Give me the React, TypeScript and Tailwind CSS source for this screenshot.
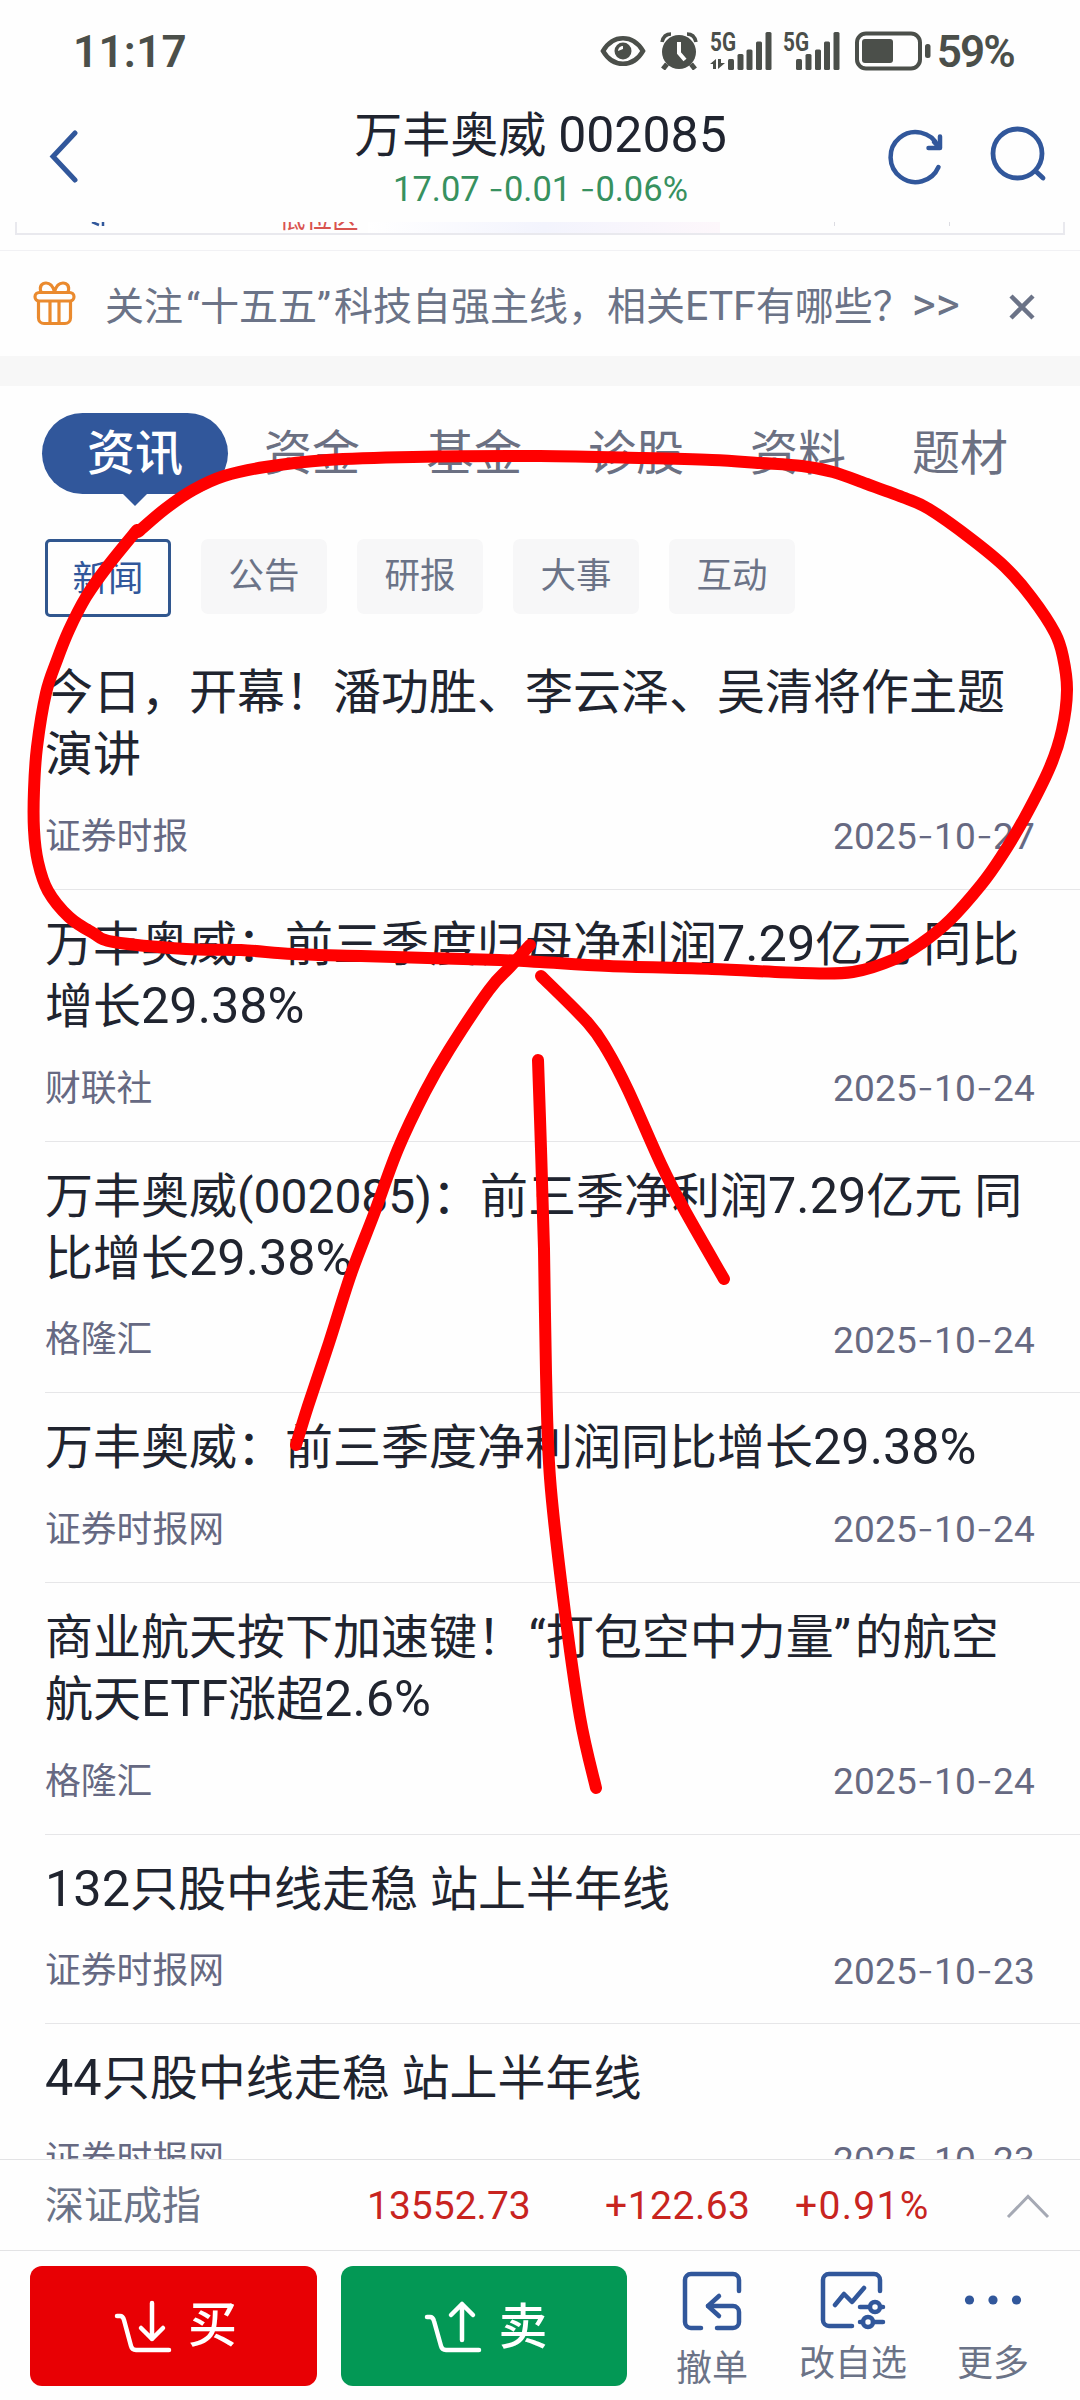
type Point = [number, number];

const TABS = ["资讯", "资金", "基金", "诊股", "资料", "题材"];

const CHIPS = ["新闻", "公告", "研报", "大事", "互动"];

const NEWS = [
  { lines: ["今日，开幕！潘功胜、李云泽、吴清将作主题", "演讲"], source: "证券时报", date: "2025-10-27" },
  { lines: ["万丰奥威：前三季度归母净利润7.29亿元 同比", "增长29.38%"], source: "财联社", date: "2025-10-24" },
  { lines: ["万丰奥威(002085)：前三季净利润7.29亿元 同", "比增长29.38%"], source: "格隆汇", date: "2025-10-24" },
  { lines: ["万丰奥威：前三季度净利润同比增长29.38%"], source: "证券时报网", date: "2025-10-24" },
  { lines: ["商业航天按下加速键！“打包空中力量”的航空", "航天ETF涨超2.6%"], source: "格隆汇", date: "2025-10-24" },
  { lines: ["132只股中线走稳 站上半年线"], source: "证券时报网", date: "2025-10-23" },
  { lines: ["44只股中线走稳 站上半年线"], source: "证券时报网", date: "2025-10-23" },
];

/* Hand-drawn marker strokes */
const LOOP: Point[] = [
  [138, 532], [165, 509], [193, 490], [224, 476], [265, 467], [327, 460], [413, 457], [540, 456],
  [643, 458], [712, 460], [760, 463], [802, 466], [833, 472], [867, 484], [905, 498], [929, 509],
  [970, 538], [1005, 567], [1032, 598], [1055, 633], [1063, 657], [1067, 690], [1062, 730],
  [1050, 767], [1025, 817], [1001, 857], [981, 885], [950, 920], [922, 943], [895, 959], [853, 972],
  [802, 973], [712, 969], [609, 966], [540, 962], [499, 960], [361, 956], [293, 954], [241, 950],
  [186, 949], [114, 942], [93, 933], [69, 917], [48, 891], [38, 862], [34, 830], [34, 790],
  [37, 747], [46, 693], [57, 660], [69, 630], [86, 597], [107, 567], [137, 530],
];
const ARROW_LEFT: Point[] = [
  [530, 945], [510, 967], [489, 990], [449, 1050], [425, 1092], [398, 1149], [374, 1214],
  [351, 1274], [329, 1343], [308, 1406], [296, 1445],
];
const ARROW_RIGHT: Point[] = [
  [541, 976], [588, 1023], [607, 1050], [628, 1090], [661, 1164], [684, 1209], [724, 1279],
];
const ARROW_STEM: Point[] = [
  [538, 1060], [541, 1149], [544, 1249], [546, 1373], [550, 1478], [563, 1597], [580, 1717], [596, 1788],
];

/** Catmull-Rom curve through all the points, as cubic beziers */
function smooth(pts: Point[]): string {
  let d = `M${pts[0][0]} ${pts[0][1]}`;
  for (let i = 0; i < pts.length - 1; i++) {
    const p0 = pts[i - 1] ?? pts[i];
    const p1 = pts[i];
    const p2 = pts[i + 1];
    const p3 = pts[i + 2] ?? p2;
    const c1 = [p1[0] + (p2[0] - p0[0]) / 6, p1[1] + (p2[1] - p0[1]) / 6];
    const c2 = [p2[0] - (p3[0] - p1[0]) / 6, p2[1] - (p3[1] - p1[1]) / 6];
    d += ` C${c1[0]} ${c1[1]} ${c2[0]} ${c2[1]} ${p2[0]} ${p2[1]}`;
  }
  return d;
}

/** Digits with a wide, thin hyphen */
function Num({ children }: { children: string }) {
  return (
    <>
      {children.split(/(-)/).map((part, i) =>
        part === "-" ? <span key={i} className="font-['Inter'] font-light">-</span> : part
      )}
    </>
  );
}

/** Chinese text whose latin runs are set a little larger and quotes a little wider */
function Mixed({ children }: { children: string }) {
  return (
    <>
      {children.split(/(\([0-9]+\)|[0-9A-Za-z.%]+|[“”])/).map((part, i) => {
        if (i % 2 === 0 || part[0] === "(") return part;
        if (part === "“") return <span key={i} className="ml-[0.08em]">{part}</span>;
        if (part === "”") return <span key={i} className="tracking-[0.08em]">{part}</span>;
        return <span key={i} className="text-[1.05em] leading-none">{part}</span>;
      })}
    </>
  );
}

function Signal({ data }: { data?: boolean }) {
  return (
    <svg className="overflow-visible" width="62" height="40" viewBox="0 0 62 40" fill="#4b4f4a">
      <text x="0" y="19.500" fontSize="26" fontWeight="700" textLength="26" lengthAdjust="spacingAndGlyphs" fontFamily="Roboto">5G</text>
      {data && <path d="M6 28v10H3v-5H0zM8 28h3v4h4l-7 6z" />}
      <rect x={data ? 18 : 13} y="28" width="6" height="11" rx="1.5" />
      <rect x={data ? 27.5 : 22.5} y="23" width="6" height="16" rx="1.5" />
      <rect x={data ? 36.5 : 32} y="18.500" width="6" height="20.500" rx="1.5" />
      <rect x={data ? 46 : 41} y="10.500" width="6" height="28.500" rx="1.5" />
      <rect x={data ? 55.5 : 50.5} y="1" width="6" height="38" rx="1.5" />
    </svg>
  );
}

function StatusBar() {
  return (
    <div className="h-[102px] flex items-center text-[#4b4f4a] text-[44px] font-semibold pl-[73px] pr-[66px]">
      <span className="tracking-[0.3px] pt-[1px]">11:17</span>
      <div className="flex-1" />
      <svg width="46" height="32" viewBox="0 0 46 32" fill="none">
        <path d="M3 16C13-1 33-1 43 16C33 33 13 33 3 16z" stroke="#4b4f4a" strokeWidth="4.500" />
        <circle cx="23" cy="16" r="8.500" fill="#4b4f4a" />
        <path d="M18 16a5 5 0 0 1 5-5v3z" fill="#fff" />
      </svg>
      <svg className="ml-[14px]" width="38" height="38" viewBox="0 0 38 38" fill="none">
        <circle cx="19" cy="20" r="17" fill="#4b4f4a" />
        <path d="M2 10C3 5 6 2 11 2M36 10C35 5 32 2 27 2" stroke="#4b4f4a" strokeWidth="3.500" />
        <path d="M7 32l-4 5M31 32l4 5" stroke="#4b4f4a" strokeWidth="5" />
        <path d="M19 10v11l6 7" stroke="#fff" strokeWidth="4" />
      </svg>
      <div className="ml-[12px] flex gap-[11px]">
        <Signal data />
        <Signal />
      </div>
      <svg className="ml-[10px]" width="76" height="40" viewBox="0 0 76 40" fill="none">
        <rect x="2" y="2.500" width="63" height="35" rx="9" stroke="#4b4f4a" strokeWidth="4" />
        <rect x="7" y="8" width="31" height="24" rx="3" fill="#4b4f4a" />
        <rect x="70" y="13" width="5.500" height="14" rx="2.500" fill="#4b4f4a" />
      </svg>
      <span className="ml-[6px] tracking-[-1.8px] pt-[1px]">59%</span>
    </div>
  );
}

function Header() {
  return (
    <header className="h-[120px] flex items-start justify-between pl-[48px] pr-[32px]">
      <svg className="mt-[27px]" width="32" height="54" viewBox="0 0 32 54" fill="none" stroke="#31579b" strokeWidth="5" strokeLinecap="round">
        <path d="M27 4L5 27.500L27 51" />
      </svg>
      <div className="ml-[114px] pt-[1px] flex flex-col items-center">
        <h1 className="text-[48px] leading-[64px] text-[#20242f]">
          万丰奥威 <span className="text-[50px]">002085</span>
        </h1>
        <p className="text-[34.500px] leading-[41px] text-[#37915f]">
          <Num>17.07 -0.01 -0.06%</Num>
        </p>
      </div>
      <div className="flex gap-[41px] mt-[22px]">
        <svg width="60" height="64" viewBox="0 0 60 64" fill="none" stroke="#31579b" strokeWidth="4.500" strokeLinecap="round" strokeLinejoin="round">
          <path d="M51.500 43A25 25 0 1 1 51 22" />
          <path d="M53 12.500v11.500H41.500M52 23l-5-5" />
        </svg>
        <svg width="60" height="64" viewBox="0 0 60 64" fill="none" stroke="#31579b" strokeWidth="4.800" strokeLinecap="round">
          <circle cx="29.500" cy="29.500" r="24.500" />
          <path d="M47.500 47l7.500 7" />
        </svg>
      </div>
    </header>
  );
}

/* Bottom edge of the quote card that is scrolled under the header */
function QuoteCardEdge() {
  return (
    <div className="h-[29px] border-b border-[#f1f1f4]">
      <div className="mx-[15px] h-[13px] overflow-hidden flex items-end border-x-2 border-b-2 border-[#e9e9ee]">
        <svg className="ml-[74px] self-start shrink-0" width="14" height="5" viewBox="0 0 14 5" fill="none" stroke="#31579b" strokeWidth="2.500">
          <path d="M1 0l7 3M12 0v4" />
        </svg>
        <span className="ml-[174px] mb-[1px] w-[82px] shrink-0 text-[26.500px] leading-[26px] text-[#d9534f]">低位区</span>
        <div className="ml-[7px] w-[352px] shrink-0 self-stretch bg-linear-to-r from-white via-[#f3f4fd] to-[#fdf7fb]" />
        <div className="ml-[114px] self-start h-[4px] w-px bg-[#dcdce2]" />
        <div className="ml-[114px] self-start h-[4px] w-px bg-[#dcdce2]" />
      </div>
    </div>
  );
}

function Banner() {
  return (
    <div className="h-[105px] flex items-center pl-[33px] pr-[44px] text-[#6b7387]">
      <svg width="43" height="45" viewBox="0 0 43 45" fill="none" stroke="#ea8a2e" strokeWidth="3.200">
        <rect x="2" y="11.500" width="39" height="8.500" rx="4.250" />
        <path d="M5.500 20v17a5.500 5.500 0 0 0 5.500 5.500h21a5.500 5.500 0 0 0 5.500-5.500V20M17 20v22M26 20v22" />
        <path d="M8 11C6 5 9 2 13 2c4 0 7 3 8.500 9C23 5 26 2 30 2c4 0 7 3 5 9" />
      </svg>
      <p className="ml-[29px] pt-[1px] text-[39px] leading-none whitespace-nowrap">
        <Mixed>关注“十五五”科技自强主线，相关ETF有哪些？</Mixed>
        <span className="text-[46px] leading-none">&gt;&gt;</span>
      </p>
      <div className="flex-1" />
      <svg className="mt-[6px]" width="28" height="28" viewBox="0 0 28 28" stroke="#6b7387" strokeWidth="4.500">
        <path d="M3 3l22 22M25 3L3 25" />
      </svg>
    </div>
  );
}

function Tabs() {
  return (
    <nav className="mt-[27px] pl-[42px] flex text-[48px] text-[#6b7082]">
      {TABS.map((tab, i) =>
        i === 0 ? (
          <div key={tab} className="flex flex-col items-center mr-[36px]">
            <span className="w-[186px] h-[81px] text-center rounded-full bg-[#31579b] text-white font-medium leading-[81px]">
              {tab}
            </span>
            <svg width="24" height="12" viewBox="0 0 24 12" fill="#31579b">
              <path d="M0 0h24L12 12z" />
            </svg>
          </div>
        ) : (
          <span key={tab} className="mr-[66px] leading-[81px]">{tab}</span>
        )
      )}
    </nav>
  );
}

function Chips() {
  return (
    <div className="mt-[33px] pl-[45px] flex items-start gap-[30px] text-[35.500px] text-[#6b7387]">
      {CHIPS.map((chip, i) => (
        <span
          key={chip}
          className={
            i === 0
              ? "w-[126px] h-[78px] rounded-[5px] border-3 border-[#31578f] text-[#31579b] text-center leading-[75px]"
              : "w-[126px] h-[75px] rounded-[7px] bg-[#f7f7f8] text-center leading-[74px]"
          }
        >
          {chip}
        </span>
      ))}
    </div>
  );
}

function NewsList() {
  return (
    <ul className="mt-[21px] pl-[45px]">
      {NEWS.map((item) => (
        <li key={item.lines[0]} className="border-b border-[#e6e6e8] pt-[24px] pb-[26px]">
          {item.lines.map((line) => (
            <p key={line} className="text-[48px] leading-[62.400px] text-[#20242f] whitespace-nowrap">
              <Mixed>{line}</Mixed>
            </p>
          ))}
          <div className="mt-[24px] pr-[45px] flex items-center justify-between h-[52px] leading-[52px] text-[#666982]">
            <span className="text-[35.800px]">{item.source}</span>
            <span className="text-[37px] tracking-[0.2px]"><Num>{item.date}</Num></span>
          </div>
        </li>
      ))}
    </ul>
  );
}

function IndexBar() {
  return (
    <div className="h-[91px] flex items-center border-t border-[#e3e3e5] text-[39px] text-[#c8241f] pl-[45px] pr-[30px] pt-[2px] shrink-0">
      <span className="w-[322px] text-[#6b7387]">深证成指</span>
      <span className="w-[238px]">13552.73</span>
      <span className="w-[190px] tracking-[0.5px]">+122.63</span>
      <span className="tracking-[1.3px]">+0.91%</span>
      <div className="flex-1" />
      <svg width="44" height="26" viewBox="0 0 44 26" fill="none" stroke="#a5a9b4" strokeWidth="3">
        <path d="M2 24L22 3.500L42 24" />
      </svg>
    </div>
  );
}

function BottomBar() {
  return (
    <div className="h-[150px] flex items-start border-t border-[#e3e3e5] pl-[30px] pt-[15px] text-[36px] text-[#6b7387] shrink-0">
      <button className="w-[287px] h-[120px] rounded-[12px] bg-[#e80004] flex items-center justify-center gap-[15px] pl-[3px] text-white text-[49px] font-medium">
        <svg width="60" height="54" viewBox="0 0 60 54" fill="none" stroke="#fff" strokeWidth="4.500" strokeLinecap="round" strokeLinejoin="round">
          <path d="M4 17h3q3 0 4 4l7 26q1 4 5 4h33" />
          <path d="M39 4v36M28 29l11 11l11-11" />
        </svg>
        买
      </button>
      <button className="ml-[24px] w-[286px] h-[120px] rounded-[12px] bg-[#039855] flex items-center justify-center gap-[15px] pl-[3px] text-white text-[49px] font-medium">
        <svg width="60" height="54" viewBox="0 0 60 54" fill="none" stroke="#fff" strokeWidth="4.500" strokeLinecap="round" strokeLinejoin="round">
          <path d="M4 18h3q3 0 4 4l7 25q1 4 5 4h33" />
          <path d="M39 41V5M28 16L39 5l11 11" />
        </svg>
        <span className="pt-[3px]">卖</span>
      </button>
      <div className="ml-[49px] w-[72px] pt-[5px] flex flex-col items-center">
        <svg width="60" height="60" viewBox="0 0 60 60" fill="none" stroke="#31579b" strokeWidth="4.500" strokeLinecap="round" strokeLinejoin="round">
          <path d="M57 20V9a6 6 0 0 0-6-6H9a6 6 0 0 0-6 6v42a6 6 0 0 0 6 6h10" />
          <path d="M35 57h16a6 6 0 0 0 6-6V41a6 6 0 0 0-6-6H26" />
          <path d="M37 25L26 35l11 10" />
        </svg>
        <span className="mt-[15px] leading-[46px]">撤单</span>
      </div>
      <div className="ml-[51px] w-[108px] pt-[5px] flex flex-col items-center">
        <svg width="66" height="60" viewBox="0 0 66 60" fill="none" stroke="#31579b" strokeWidth="4.500" strokeLinecap="round" strokeLinejoin="round">
          <path d="M60 20V9a6 6 0 0 0-6-6H9a6 6 0 0 0-6 6v40a6 6 0 0 0 6 6h23" />
          <path d="M15 34l9-11l8 8l12-14" />
          <path d="M40 36h8M61 36h2M40 51h3M53 51h10" />
          <circle cx="55" cy="36" r="5" />
          <circle cx="48" cy="51" r="5" />
        </svg>
        <span className="mt-[10px] leading-[46px] whitespace-nowrap">改自选</span>
      </div>
      <div className="ml-[50px] w-[72px] pt-[5px] flex flex-col items-center">
        <svg width="60" height="60" viewBox="0 0 60 60" fill="#31579b">
          <circle cx="6.500" cy="29" r="4.600" />
          <circle cx="30" cy="29" r="4.600" />
          <circle cx="53.500" cy="29" r="4.600" />
        </svg>
        <span className="mt-[10px] leading-[46px]">更多</span>
      </div>
    </div>
  );
}

function Marker() {
  return (
    <svg
      className="absolute inset-0 pointer-events-none"
      width="1080"
      height="2400"
      viewBox="0 0 1080 2400"
      fill="none"
      stroke="#ff0000"
      strokeWidth="12"
      strokeLinecap="round"
      strokeLinejoin="round"
    >
      <path d={smooth(LOOP)} />
      <path d={smooth(ARROW_LEFT)} />
      <path d={smooth(ARROW_RIGHT)} />
      <path d={smooth(ARROW_STEM)} />
    </svg>
  );
}

export default function App() {
  return (
    <div className="relative w-[1080px] h-[2400px] overflow-hidden bg-[#fefefe] flex flex-col font-['Roboto','Noto_Sans_CJK_SC',sans-serif]">
      <StatusBar />
      <Header />
      <QuoteCardEdge />
      <Banner />
      <div className="h-[30px] bg-[#f7f7f7] shrink-0" />
      <main className="h-[1773px] overflow-hidden shrink-0">
        <Tabs />
        <Chips />
        <NewsList />
      </main>
      <IndexBar />
      <BottomBar />
      <Marker />
    </div>
  );
}
